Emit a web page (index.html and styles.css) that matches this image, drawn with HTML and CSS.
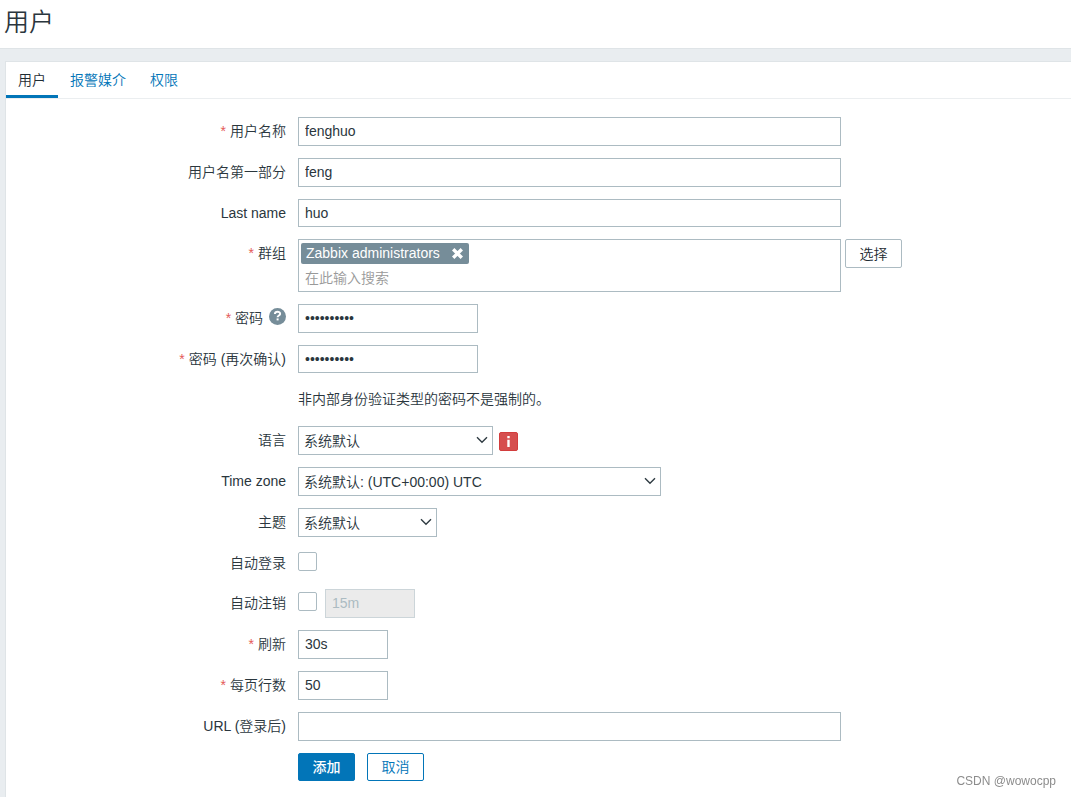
FILE: index.html
```html
<!DOCTYPE html>
<html lang="zh-CN">
<head>
<meta charset="utf-8">
<meta name="viewport" content="width=device-width, initial-scale=1">
<title>用户</title>
<link rel="stylesheet" href="styles.css">
</head>
<body>
<header class="page-header"><h1 class="page-title">用户</h1></header>
<main class="panel">
  <nav class="tabs">
    <a class="tab tab-active" href="#user">用户</a>
    <a class="tab" href="#media">报警媒介</a>
    <a class="tab" href="#permissions">权限</a>
  </nav>
  <form class="form" id="user">
    <div class="row">
      <label class="label required" for="username">用户名称</label>
      <div class="field"><input class="input input-wide" id="username" type="text" value="fenghuo"></div>
    </div>
    <div class="row">
      <label class="label" for="firstname">用户名第一部分</label>
      <div class="field"><input class="input input-wide" id="firstname" type="text" value="feng"></div>
    </div>
    <div class="row row-compact">
      <label class="label" for="lastname">Last name</label>
      <div class="field"><input class="input input-wide" id="lastname" type="text" value="huo"></div>
    </div>
    <div class="row">
      <label class="label required" for="groups">群组</label>
      <div class="field field-groups">
        <div class="multiselect">
          <span class="tag">Zabbix administrators
            <button class="tag-remove" type="button" aria-label="Remove">
              <svg width="13" height="13" viewBox="0 0 13 13"><path d="M2.2 2.2L10.8 10.8M10.8 2.2L2.2 10.8" stroke="#fff" stroke-width="3.4"/></svg>
            </button>
          </span>
          <input class="search" id="groups" type="text" placeholder="在此输入搜索">
        </div>
        <button class="button button-grey" type="button">选择</button>
      </div>
    </div>
    <div class="row">
      <div class="label">
        <label class="required" for="password">密码</label>
        <button class="help" type="button" aria-label="Help">
          <svg width="17" height="17" viewBox="0 0 17 17"><circle cx="8.5" cy="8.5" r="8.5" fill="#768d99"/><path d="M5.9 6C6.1 3 11.2 3.1 11.1 5.9C11.1 7.6 8.6 7.4 8.6 9.2" fill="none" stroke="#fff" stroke-width="2"/><path d="M7.6 10.4h2v2h-2z" fill="#fff"/></svg>
        </button>
      </div>
      <div class="field"><input class="input input-password" id="password" type="password" value="zabbixpass"></div>
    </div>
    <div class="row row-compact">
      <label class="label required" for="password2">密码 (再次确认)</label>
      <div class="field"><input class="input input-password" id="password2" type="password" value="zabbixpass"></div>
    </div>
    <div class="row">
      <p class="field note">非内部身份验证类型的密码不是强制的。</p>
    </div>
    <div class="row">
      <label class="label" for="lang">语言</label>
      <div class="field">
        <select class="select select-lang" id="lang"><option>系统默认</option></select>
        <button class="info" type="button" aria-label="Info">
          <svg width="19" height="19" viewBox="0 0 19 19"><rect x=".5" y=".5" width="18" height="18" rx="1.5" fill="#d64e4e" stroke="#d23d3d"/><path d="M8.3 4h2.4v2.2H8.3zM8.3 7.7h2.4V15H8.3z" fill="#fff"/></svg>
        </button>
      </div>
    </div>
    <div class="row">
      <label class="label" for="timezone">Time zone</label>
      <div class="field"><select class="select select-zone" id="timezone"><option>系统默认: (UTC+00:00) UTC</option></select></div>
    </div>
    <div class="row">
      <label class="label" for="theme">主题</label>
      <div class="field"><select class="select select-theme" id="theme"><option>系统默认</option></select></div>
    </div>
    <div class="row row-compact">
      <label class="label" for="autologin">自动登录</label>
      <div class="field"><input class="checkbox" id="autologin" type="checkbox"></div>
    </div>
    <div class="row">
      <label class="label" for="autologout">自动注销</label>
      <div class="field">
        <input class="checkbox" id="autologout" type="checkbox">
        <input class="input input-short" type="text" value="15m" aria-label="自动注销" disabled>
      </div>
    </div>
    <div class="row">
      <label class="label required" for="refresh">刷新</label>
      <div class="field"><input class="input input-short" id="refresh" type="text" value="30s"></div>
    </div>
    <div class="row">
      <label class="label required" for="rows">每页行数</label>
      <div class="field"><input class="input input-short" id="rows" type="text" value="50"></div>
    </div>
    <div class="row">
      <label class="label" for="url">URL (登录后)</label>
      <div class="field"><input class="input input-wide" id="url" type="text"></div>
    </div>
    <div class="row row-compact">
      <div class="field actions">
        <button class="button button-primary" type="submit">添加</button>
        <button class="button" type="button">取消</button>
      </div>
    </div>
  </form>
</main>
<div class="watermark">CSDN @wowocpp</div>
</body>
</html>
```
FILE: styles.css
```css
* { box-sizing: border-box; }

body {
  display: flex;
  flex-direction: column;
  min-height: 100vh;
  margin: 0;
  background: #e9edf0;
  color: #2a363d;
  font: 350 14px/20px "Liberation Sans", "Noto Sans CJK SC", sans-serif;
}

input, select, button { font: inherit; color: inherit; }

.page-header {
  padding: 4px 4px 8px;
  background: #fff;
  border-bottom: 1px solid #dfe4e7;
}

.page-title {
  margin: 0;
  font-size: 25px;
  font-weight: 350;
  line-height: 36px;
}

.panel {
  flex: 1;
  margin: 12px 0 0 5px;
  background: #fff;
  border: solid #dfe4e7;
  border-width: 1px 0 0 1px;
}

.tabs {
  display: flex;
  border-bottom: 1px solid #ebeef0;
}

.tab {
  padding: 8px 12px 5px;
  border-bottom: 3px solid transparent;
  color: #0275b8;
  text-decoration: none;
}

.tab-active {
  color: #1f2c33;
  border-bottom-color: #0275b8;
}

.form {
  display: flex;
  flex-direction: column;
  gap: 12px;
  padding: 18px 0 16px;
}

.row {
  --control-height: 29px;
  display: grid;
  grid-template-columns: 280px minmax(0, 1fr);
  column-gap: 12px;
  min-height: var(--control-height);
}

.row-compact { --control-height: 28px; }

.label {
  text-align: right;
  line-height: 28px;
}

.required::before {
  content: "*";
  margin-right: 4px;
  color: #e45959;
}

.field {
  grid-column: 2;
  display: flex;
  align-items: flex-start;
}

.note {
  margin: 0;
  line-height: 29px;
}

.input {
  height: var(--control-height);
  padding: 0 6px 1px;
  background: #fff;
  border: 1px solid #acbbc2;
  border-radius: 0;
}

.input:disabled {
  background: #ebebeb;
  border-color: #ccd5d9;
  color: #acbbc2;
}

.input-wide { width: 100%; max-width: 543px; }
.input-password { width: 180px; }
.input-short { width: 90px; }

.field-groups { gap: 4px; }

.multiselect {
  display: flex;
  flex-direction: column;
  align-items: flex-start;
  gap: 4px;
  width: 100%;
  max-width: 543px;
  padding: 3px 2px;
  border: 1px solid #acbbc2;
}

.tag {
  display: flex;
  align-items: center;
  gap: 11px;
  padding: 0 5px;
  background: #768d99;
  border-radius: 2px;
  color: #fff;
  font-weight: 400;
  line-height: 21px;
}

.tag-remove, .help, .info {
  display: inline-flex;
  padding: 0;
  background: none;
  border: 0;
}

.help { margin-left: 2px; vertical-align: -2px; }
.info { margin: 6px 0 0 6px; }

.search {
  width: 100%;
  height: 20px;
  padding: 0 4px;
  border: 0;
}

.search::placeholder { color: #999; }

.select {
  height: var(--control-height);
  padding: 0 24px 0 5px;
  appearance: none;
  background: #fff url("data:image/svg+xml,%3Csvg xmlns='http://www.w3.org/2000/svg' width='12' height='8' viewBox='0 0 12 8'%3E%3Cpath d='M1 1.2L6 6.2L11 1.2' fill='none' stroke='%232f3b42' stroke-width='1.4'/%3E%3C/svg%3E") no-repeat right 4px top 9px;
  border: 1px solid #acbbc2;
  border-radius: 0;
}

.select-lang { width: 195px; }
.select-zone { width: 363px; }
.select-theme { width: 139px; }

.checkbox {
  width: 19px;
  height: 19px;
  margin: 3px 8px 0 0;
  appearance: none;
  background: #fff;
  border: 1px solid #acbbc2;
  border-radius: 2px;
}

.button {
  flex: none;
  min-width: 57px;
  height: var(--control-height);
  padding: 0 12px;
  background: #fff;
  border: 1px solid #0275b8;
  border-radius: 2px;
  color: #0275b8;
}

.button-grey { border-color: #acbbc2; color: #1f2c33; }
.button-primary { background: #0275b8; color: #fff; font-weight: 500; }

.actions { gap: 12px; }

.watermark {
  position: fixed;
  right: 15px;
  bottom: 8px;
  color: #8c8c8c;
  font-size: 12px;
  line-height: 16px;
}
```
